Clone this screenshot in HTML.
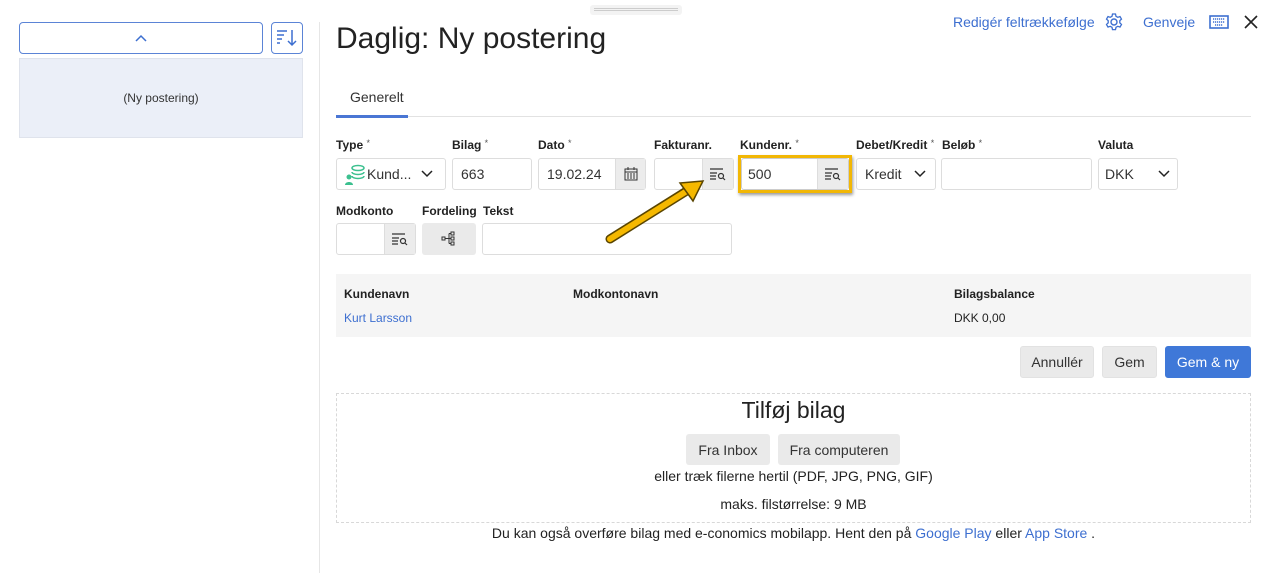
<!DOCTYPE html>
<html><head><meta charset="utf-8"><style>
*{box-sizing:border-box;margin:0;padding:0}
body{width:1269px;height:573px;position:relative;background:#fff;font-family:"Liberation Sans",sans-serif;color:#222;overflow:hidden}
.a{position:absolute}
.lbl{position:absolute;font-size:12px;font-weight:bold;color:#222;top:138px;line-height:14px;height:14px}
.lbl i{font-style:normal;font-weight:normal;font-size:9px;color:#555;position:relative;top:-3px}
.in{position:absolute;border:1px solid #ddd;border-radius:3px;background:#fff;font-size:14px;color:#333;padding-left:8px;display:flex;align-items:center}
.btn{position:absolute;background:#eaeaea;border-radius:3px;font-size:14px;color:#333;display:flex;align-items:center;justify-content:center;border:1px solid #e2e2e2}
.lk{color:#3d6fd0}
.srch{position:absolute;right:0;top:0;bottom:0;width:31px;background:#ececec;border-left:1px solid #ddd;display:flex;align-items:center;justify-content:center}
</style></head><body>
<div class="a" style="left:590px;top:5px;width:92px;height:10px;background:#f3f3f3;border-radius:3px"><div style="margin:3px 4px;height:3px;border-top:1px solid #ccc;border-bottom:1px solid #ccc"></div></div>

<div class="a" style="left:19px;top:22px;width:244px;height:32px;border:1px solid #5b84d6;border-radius:4px;display:flex;align-items:center;justify-content:center">
<svg width="12" height="8" viewBox="0 0 12 8"><path d="M1 7L6 2L11 7" stroke="#3d6fd0" stroke-width="1.5" fill="none"/></svg></div>
<div class="a" style="left:271px;top:22px;width:32px;height:32px;border:1px solid #5b84d6;border-radius:4px">
<svg width="30" height="30" viewBox="0 0 30 30"><path d="M5 8h10M5 12h7M5 16h5M5 20h3M20 7v15M16 18l4 4 4-4" stroke="#3d6fd0" stroke-width="1.5" fill="none"/></svg></div>
<div class="a" style="left:19px;top:58px;width:284px;height:80px;background:#ebeff8;border:1px solid #dfe3ec;display:flex;align-items:center;justify-content:center;font-size:12px;color:#333">(Ny postering)</div>
<div class="a" style="left:319px;top:22px;width:1px;height:551px;background:#e6e6e6"></div>

<div class="a" style="left:336px;top:22px;font-size:30px;color:#222">Daglig: Ny postering</div>

<div class="a lk" style="left:953px;top:14px;font-size:14px">Redigér feltrækkefølge</div>
<svg class="a" style="left:1104px;top:12px" width="20" height="20" viewBox="0 0 20 20"><circle cx="10" cy="10" r="3" stroke="#3d6fd0" stroke-width="1.4" fill="none"/><path d="M8.5 2h3l.5 2.3 1.8 1 2.2-.8 1.5 2.6-1.7 1.6v2.2l1.7 1.6-1.5 2.6-2.2-.8-1.8 1-.5 2.3h-3l-.5-2.3-1.8-1-2.2.8-1.5-2.6 1.7-1.6V8.7L2.5 7.1 4 4.5l2.2.8 1.8-1z" stroke="#3d6fd0" stroke-width="1.3" fill="none"/></svg>
<div class="a lk" style="left:1143px;top:14px;font-size:14px">Genveje</div>
<svg class="a" style="left:1209px;top:15px" width="20" height="14" viewBox="0 0 20 14"><rect x="1" y="1" width="18" height="12" stroke="#3d6fd0" stroke-width="1.6" fill="none"/><path d="M4 4h12M4 7h12M6 10h8" stroke="#3d6fd0" stroke-width="1.5" stroke-dasharray="1.2 0.8"/></svg>
<svg class="a" style="left:1244px;top:15px" width="14" height="14" viewBox="0 0 14 14"><path d="M1 1l12 12M13 1L1 13" stroke="#222" stroke-width="1.6"/></svg>

<div class="a" style="left:350px;top:89px;font-size:14px;color:#333">Generelt</div>
<div class="a" style="left:336px;top:116px;width:915px;height:1px;background:#e2e2e2"></div>
<div class="a" style="left:336px;top:115px;width:72px;height:3px;background:#4a76d4"></div>

<div class="lbl" style="left:336px">Type <i>*</i></div>
<div class="lbl" style="left:452px">Bilag <i>*</i></div>
<div class="lbl" style="left:538px">Dato <i>*</i></div>
<div class="lbl" style="left:654px">Fakturanr.</div>
<div class="lbl" style="left:740px">Kundenr. <i>*</i></div>
<div class="lbl" style="left:856px">Debet/Kredit <i>*</i></div>
<div class="lbl" style="left:942px">Beløb <i>*</i></div>
<div class="lbl" style="left:1098px">Valuta</div>

<div class="in" style="left:336px;top:158px;width:110px;height:32px;padding-left:6px">
<svg width="24" height="22" viewBox="0 0 24 22"><ellipse cx="15" cy="5" rx="6" ry="2.5" stroke="#3cc08f" stroke-width="1.5" fill="none"/><path d="M9 9c0 1.5 3 2.5 6 2.5s6-1 6-2.5M9 13c0 1.5 3 2.5 6 2.5s6-1 6-2.5" stroke="#3cc08f" stroke-width="1.5" fill="none"/><circle cx="6" cy="14" r="2.5" fill="#3cc08f"/><path d="M2 22c0-4 8-4 8 0z" fill="#3cc08f"/></svg>
<span>Kund...</span>
<svg style="margin-left:10px" width="12" height="8" viewBox="0 0 12 8"><path d="M1 1l5 5 5-5" stroke="#222" stroke-width="1.5" fill="none"/></svg></div>
<div class="in" style="left:452px;top:158px;width:80px;height:32px">663</div>
<div class="in" style="left:538px;top:158px;width:108px;height:32px">19.02.24<div class="srch" style="width:30px"><svg width="14" height="14" viewBox="0 0 14 14"><rect x="1" y="2" width="12" height="11" stroke="#333" fill="none"/><path d="M1 5h12M3 7h2M6 7h2M9 7h2M3 9h2M6 9h2M9 9h2M3 11h2M6 11h2M9 11h2M4 0v3M10 0v3" stroke="#333"/></svg></div></div>
<div class="in" style="left:654px;top:158px;width:80px;height:32px"><div class="srch"><svg width="18" height="14" viewBox="0 0 18 14"><path d="M1 2h13M1 6h7M1 9h6M1 12h6" stroke="#333" stroke-width="1.2"/><circle cx="12" cy="9" r="2.5" stroke="#333" stroke-width="1.2" fill="none"/><path d="M14 11l2 2" stroke="#333" stroke-width="1.2"/></svg></div></div>
<div class="a" style="left:738px;top:155px;width:114px;height:38px;border:3px solid #f2b705;box-shadow:1px 2px 3px rgba(0,0,0,.4)"></div>
<div class="in" style="left:741px;top:158px;width:108px;height:32px;padding-left:6px;border-color:#ccc">500<div class="srch"><svg width="18" height="14" viewBox="0 0 18 14"><path d="M1 2h13M1 6h7M1 9h6M1 12h6" stroke="#333" stroke-width="1.2"/><circle cx="12" cy="9" r="2.5" stroke="#333" stroke-width="1.2" fill="none"/><path d="M14 11l2 2" stroke="#333" stroke-width="1.2"/></svg></div></div>
<div class="in" style="left:856px;top:158px;width:80px;height:32px">Kredit<svg style="margin-left:12px" width="12" height="8" viewBox="0 0 12 8"><path d="M1 1l5 5 5-5" stroke="#222" stroke-width="1.5" fill="none"/></svg></div>
<div class="in" style="left:941px;top:158px;width:151px;height:32px"></div>
<div class="in" style="left:1098px;top:158px;width:80px;height:32px;padding-left:6px">DKK<svg style="margin-left:24px" width="12" height="8" viewBox="0 0 12 8"><path d="M1 1l5 5 5-5" stroke="#222" stroke-width="1.5" fill="none"/></svg></div>

<div class="lbl" style="left:336px;top:204px">Modkonto</div>
<div class="lbl" style="left:422px;top:204px">Fordeling</div>
<div class="lbl" style="left:483px;top:204px">Tekst</div>
<div class="in" style="left:336px;top:223px;width:80px;height:32px"><div class="srch"><svg width="18" height="14" viewBox="0 0 18 14"><path d="M1 2h13M1 6h7M1 9h6M1 12h6" stroke="#333" stroke-width="1.2"/><circle cx="12" cy="9" r="2.5" stroke="#333" stroke-width="1.2" fill="none"/><path d="M14 11l2 2" stroke="#333" stroke-width="1.2"/></svg></div></div>
<div class="btn" style="left:422px;top:223px;width:54px;height:32px;border:none"><svg width="16" height="16" viewBox="0 0 16 16"><rect x="1" y="6" width="3" height="3" stroke="#333" fill="none"/><rect x="10" y="1" width="3" height="3" stroke="#333" fill="none"/><rect x="10" y="6" width="3" height="3" stroke="#333" fill="none"/><rect x="10" y="11" width="3" height="3" stroke="#333" fill="none"/><path d="M4 7.5h4M8 2.5v10M8 2.5h2M8 7.5h2M8 12.5h2" stroke="#333"/></svg></div>
<div class="in" style="left:482px;top:223px;width:250px;height:32px"></div>

<svg class="a" style="left:600px;top:175px" width="115" height="75" viewBox="600 175 115 75"><path d="M610 239L693 187" stroke="#5a4500" stroke-width="9" stroke-linecap="round"/><path d="M610 239L690 189" stroke="#f5b800" stroke-width="6" stroke-linecap="round"/><path d="M703 181L680 183L693 201Z" fill="#f5b800" stroke="#5a4500" stroke-width="1.5"/></svg>

<div class="a" style="left:336px;top:274px;width:915px;height:63px;background:#f5f5f5"></div>
<div class="a" style="left:344px;top:287px;font-size:12px;font-weight:bold">Kundenavn</div>
<div class="a" style="left:573px;top:287px;font-size:12px;font-weight:bold">Modkontonavn</div>
<div class="a" style="left:954px;top:287px;font-size:12px;font-weight:bold">Bilagsbalance</div>
<div class="a lk" style="left:344px;top:311px;font-size:12px">Kurt Larsson</div>
<div class="a" style="left:954px;top:311px;font-size:12px">DKK 0,00</div>

<div class="btn" style="left:1020px;top:346px;width:74px;height:32px">Annullér</div>
<div class="btn" style="left:1102px;top:346px;width:55px;height:32px">Gem</div>
<div class="btn" style="left:1165px;top:346px;width:86px;height:32px;background:#3f78d8;border-color:#3f78d8;color:#fff">Gem &amp; ny</div>

<div class="a" style="left:336px;top:393px;width:915px;height:130px;border:1px dashed #d8d8d8"></div>
<div class="a" style="left:336px;top:397px;width:915px;text-align:center;font-size:23px">Tilføj bilag</div>
<div class="btn" style="left:686px;top:434px;width:84px;height:31px;border:none">Fra Inbox</div>
<div class="btn" style="left:778px;top:434px;width:122px;height:31px;border:none">Fra computeren</div>
<div class="a" style="left:336px;top:468px;width:915px;text-align:center;font-size:14px">eller træk filerne hertil (PDF, JPG, PNG, GIF)</div>
<div class="a" style="left:336px;top:496px;width:915px;text-align:center;font-size:14px">maks. filstørrelse: 9 MB</div>
<div class="a" style="left:336px;top:525px;width:915px;text-align:center;font-size:14px">Du kan også overføre bilag med e-conomics mobilapp. Hent den på <span class="lk">Google Play</span> eller <span class="lk">App Store</span> .</div>
</body></html>
